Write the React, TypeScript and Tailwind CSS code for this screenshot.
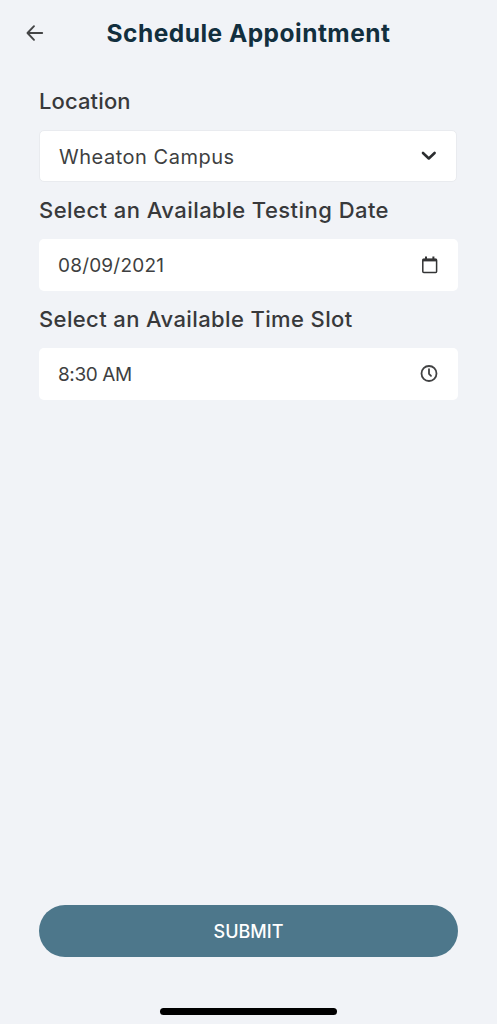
import React from "react";

type FieldProps = {
    label: string;
    labelClass: string;
    value: string;
    valueClass: string;
    boxClass: string;
    icon: React.ReactNode;
};

function ArrowIcon() {
    return (
        <svg width="18" height="18" viewBox="0 0 18 18" fill="none" stroke="#444546" strokeWidth="1.9"
             strokeLinecap="round" strokeLinejoin="round">
            <path d="M16.2 9H1.8M8 2.2L1.5 9L8 15.8"/>
        </svg>
    );
}

function ChevronIcon() {
    return (
        <svg width="18" height="18" viewBox="0 0 18 18" fill="none" stroke="#2b2d2f" strokeWidth="2.6"
             strokeLinecap="round" strokeLinejoin="round">
            <path d="M3 6L8.8 11.5L14.6 6"/>
        </svg>
    );
}

function CalendarIcon() {
    return (
        <svg width="18" height="18" viewBox="0 0 18 18" fill="none">
            <rect x="1.8" y="3.2" width="13.8" height="13.4" rx="1" stroke="#333435" strokeWidth="1.5"/>
            <path d="M1.6 2.8H15.8V5.4H1.6Z" fill="#333435"/>
            <path d="M5 0.4V3M12.4 0.4V3" stroke="#333435" strokeWidth="2"/>
        </svg>
    );
}

function ClockIcon() {
    return (
        <svg width="18" height="18" viewBox="0 0 18 18" fill="none" stroke="#414243" strokeWidth="1.8"
             strokeLinecap="round" strokeLinejoin="round">
            <circle cx="9" cy="8.5" r="7.5"/>
            <path d="M9 4.2V8.8L11 10.8"/>
        </svg>
    );
}

function Field({label, labelClass, value, valueClass, boxClass, icon}: FieldProps) {
    return (
        <div>
            <div className="flex h-8 items-center">
                <span className={`whitespace-nowrap font-medium text-[#38393b] ${labelClass}`}>{label}</span>
            </div>
            <button type="button"
                    className={`mt-[13px] flex h-[52px] items-center justify-between rounded-[5px] bg-white ${boxClass}`}>
                <span className={`whitespace-nowrap pt-0.5 text-[#3e3f41] ${valueClass}`}>{value}</span>
                {icon}
            </button>
        </div>
    );
}

export default function App() {
    return (
        <div className="flex h-screen w-full flex-col overflow-hidden bg-[#f1f3f7] font-['Inter','Open_Sans',sans-serif]">
            <header className="grid h-[66px] shrink-0 grid-cols-[80px_1fr_80px] items-center">
                <button type="button" aria-label="Back" className="ml-[26px] w-fit">
                    <ArrowIcon/>
                </button>
                <h1 className="text-center text-[24.5px] leading-8 font-bold tracking-[0.48px] whitespace-nowrap text-[#122f3e]">
                    Schedule Appointment
                </h1>
            </header>
            <main className="flex flex-1 flex-col pr-[39px] pl-[39px]">
                <div className="mt-[19px] flex flex-col gap-3">
                    <Field label="Location" labelClass="text-[22px] tracking-[0.12px]" value="Wheaton Campus"
                           valueClass="text-[20px] tracking-[0.52px]"
                           boxClass="w-[418px] border border-[#e9ebef] pr-[18px] pl-[19px]" icon={<ChevronIcon/>}/>
                    <Field label="Select an Available Testing Date" labelClass="text-[22px] tracking-[0.45px]"
                           value="08/09/2021" valueClass="text-[19px] tracking-[0.2px]"
                           boxClass="w-full pr-[19px] pl-[19px]" icon={<CalendarIcon/>}/>
                    <Field label="Select an Available Time Slot" labelClass="text-[22px] tracking-[0.38px]"
                           value="8:30 AM" valueClass="text-[19px] tracking-[-0.4px]"
                           boxClass="w-full pr-5 pl-[19px]" icon={<ClockIcon/>}/>
                </div>
                <button type="button"
                        className="mt-auto h-[52px] w-full rounded-full bg-[#4d778b] text-[18px] font-medium text-white">
                    SUBMIT
                </button>
            </main>
            <footer className="flex h-[67px] shrink-0 items-end justify-center pb-[9.5px]">
                <div className="h-[6.5px] w-[177px] rounded-full bg-black"/>
            </footer>
        </div>
    );
}
